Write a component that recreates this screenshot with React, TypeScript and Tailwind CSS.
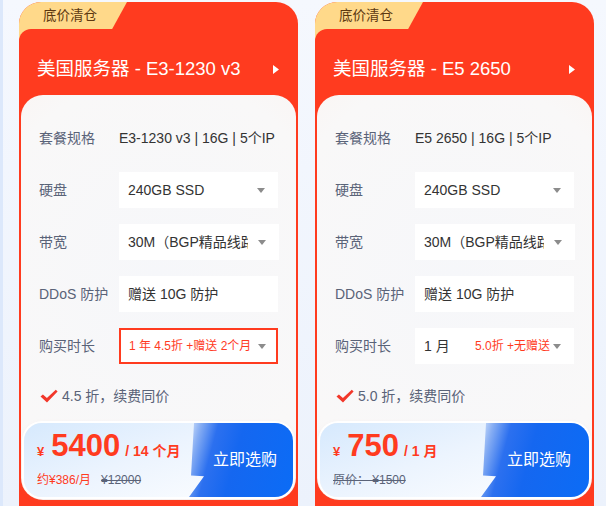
import type { ReactNode } from "react";

const font = "font-['Liberation_Sans','Noto_Sans_CJK_SC',sans-serif]";

function Caret() {
  return (
    <svg width="8" height="5" viewBox="0 0 8 5" className="shrink-0">
      <path d="M0 0h8L4 5z" fill="#8c8c8c" />
    </svg>
  );
}

function Check() {
  return (
    <svg width="18" height="14" viewBox="0 0 18 14" className="shrink-0">
      <path d="M0.5 7.6 2.9 5.4 6.9 8.9 15.8 0.8 17.6 2.6 7 13.4Z" fill="#f2372a" />
    </svg>
  );
}

function Row({ label, children }: { label: string; children: ReactNode }) {
  return (
    <div className="flex h-[36px] items-center">
      <span className="w-[80px] shrink-0 text-[14px] text-[#5a6378]">{label}</span>
      {children}
    </div>
  );
}

function Select({
  children,
  active = false,
  gap = "gap-[10px]"
}: {
  children: ReactNode;
  active?: boolean;
  gap?: string;
}) {
  return (
    <div
      className={`flex h-[36px] w-[160px] items-center bg-white ${gap} ${
        active ? "border-2 border-[#ff3b1f] pl-[8px] pr-[10px]" : "pl-[9px] pr-[13px]"
      }`}
    >
      <div className="flex min-w-0 flex-1 items-center overflow-hidden whitespace-nowrap">
        {children}
      </div>
      <Caret />
    </div>
  );
}

function ServerCard({
  title,
  spec,
  duration,
  durationActive,
  checkText,
  price,
  unit,
  sub,
  btnWidth
}: {
  title: string;
  spec: string;
  duration: ReactNode;
  durationActive?: boolean;
  checkText: string;
  price: string;
  unit: string;
  sub: ReactNode;
  btnWidth: string;
}) {
  return (
    <div className="relative h-[540px] w-[279px] shrink-0 overflow-hidden rounded-t-[22px] bg-[#ff3b1f]">
      <div className="absolute left-0 top-0 h-[40px] w-[108px] bg-[#ffd98a] [clip-path:polygon(0_0,108px_0,86px_40px,0_40px)]" />
      <div className="absolute left-0 top-[27px] h-[20px] w-[140px] rounded-tl-[12px] bg-[#ff3b1f]" />
      <span className="absolute left-[24px] top-[5px] text-[13.5px] leading-[18px] text-[#5c3810]">
        底价清仓
      </span>

      <div className="mt-[55px] flex h-[24px] items-center justify-between pl-[18px] pr-[19px]">
        <span className="text-[18.5px] leading-[24px] text-white">{title}</span>
        <svg width="6" height="9" viewBox="0 0 6 9">
          <path d="M0 0 6 4.5 0 9z" fill="#fff" />
        </svg>
      </div>

      <div className="mx-[2px] mt-[14px] flex h-[405px] flex-col rounded-[22px] bg-[radial-gradient(115%_85%_at_50%_45%,#f6f7fa_0%,#f9f8f8_58%,#fcefe9_100%)] px-[18px] pt-[25px]">
        <div className="flex flex-col gap-[16px]">
          <Row label="套餐规格">
            <span className="whitespace-nowrap text-[14px] text-[#333]">{spec}</span>
          </Row>
          <Row label="硬盘">
            <Select>
              <span className="text-[14px] text-[#333]">240GB SSD</span>
            </Select>
          </Row>
          <Row label="带宽">
            <Select>
              <span className="text-[14px] text-[#333]">30M（BGP精品线路）</span>
            </Select>
          </Row>
          <Row label="DDoS 防护">
            <div className="flex h-[36px] w-[160px] items-center bg-white pl-[9px]">
              <span className="text-[14px] text-[#333]">赠送 10G 防护</span>
            </div>
          </Row>
          <Row label="购买时长">
            <Select active={durationActive} gap="gap-[3px]">
              {duration}
            </Select>
          </Row>
        </div>

        <div className="mt-[22px] flex h-[20px] items-center gap-[4px] pl-[1px]">
          <Check />
          <span className="text-[14px] text-[#5a6378]">{checkText}</span>
        </div>

        <div className="-mx-[15px] mt-[17px] flex h-[74px] overflow-hidden rounded-[18px] bg-[linear-gradient(160deg,#d6e9fd_0%,#ecf4fe_45%,#ffffff_100%)] shadow-[0_0_0_2px_#fff,0_2px_6px_rgba(200,120,100,0.15)]">
          <div className="flex min-w-0 flex-1 flex-col pl-[13px] pt-[5px]">
            <div className="flex items-baseline whitespace-nowrap font-bold text-[#ff3b1f]">
              <span className="mr-[7px] text-[13px]">¥</span>
              <span className="text-[31px] leading-[36px]">{price}</span>
              <span className="ml-[5px] text-[14px]">{unit}</span>
            </div>
            <div className="mt-[8px] flex items-center gap-[10px] whitespace-nowrap text-[12px] leading-[16px]">
              {sub}
            </div>
          </div>
          <div
            className={`${btnWidth} flex shrink-0 items-center justify-center bg-[linear-gradient(105deg,#d3e3fb_0%,#86adf3_10%,#2c70ef_24%,#1567f0_45%,#0b6cf6_100%)] pl-[8px] [clip-path:polygon(5px_0,100%_0,100%_100%,0_100%,15px_72%,2px_71%)]`}
          >
            <span className="text-[16px] text-white">立即选购</span>
          </div>
        </div>
      </div>
    </div>
  );
}

export default function App() {
  return (
    <div
      className={`${font} flex h-[506px] w-[606px] gap-[17px] overflow-hidden border-l-[3px] border-[#dce8fb] bg-[linear-gradient(180deg,#f5f8fe_0%,#ecf2fc_100%)] pl-[16px] pt-[2px]`}
    >
      <ServerCard
        title="美国服务器 - E3-1230 v3"
        spec="E3-1230 v3 | 16G | 5个IP"
        durationActive
        duration={<span className="text-[12px] text-[#ff3b1f]">1 年 4.5折 +赠送 2个月</span>}
        checkText="4.5 折，续费同价"
        price="5400"
        unit="/ 14 个月"
        sub={
          <>
            <span className="text-[#ff3b1f]">约¥386/月</span>
            <span className="text-[#5a6378] line-through">¥12000</span>
          </>
        }
        btnWidth="w-[104px]"
      />
      <ServerCard
        title="美国服务器 - E5 2650"
        spec="E5 2650 | 16G | 5个IP"
        duration={
          <div className="flex w-full items-center justify-between">
            <span className="text-[14px] text-[#333]">1 月</span>
            <span className="text-[12px] text-[#ff3b1f]">5.0折 +无赠送</span>
          </div>
        }
        checkText="5.0 折，续费同价"
        price="750"
        unit="/ 1 月"
        sub={<span className="text-[#5a6378] line-through">原价： ¥1500</span>}
        btnWidth="w-[108px]"
      />
    </div>
  );
}
